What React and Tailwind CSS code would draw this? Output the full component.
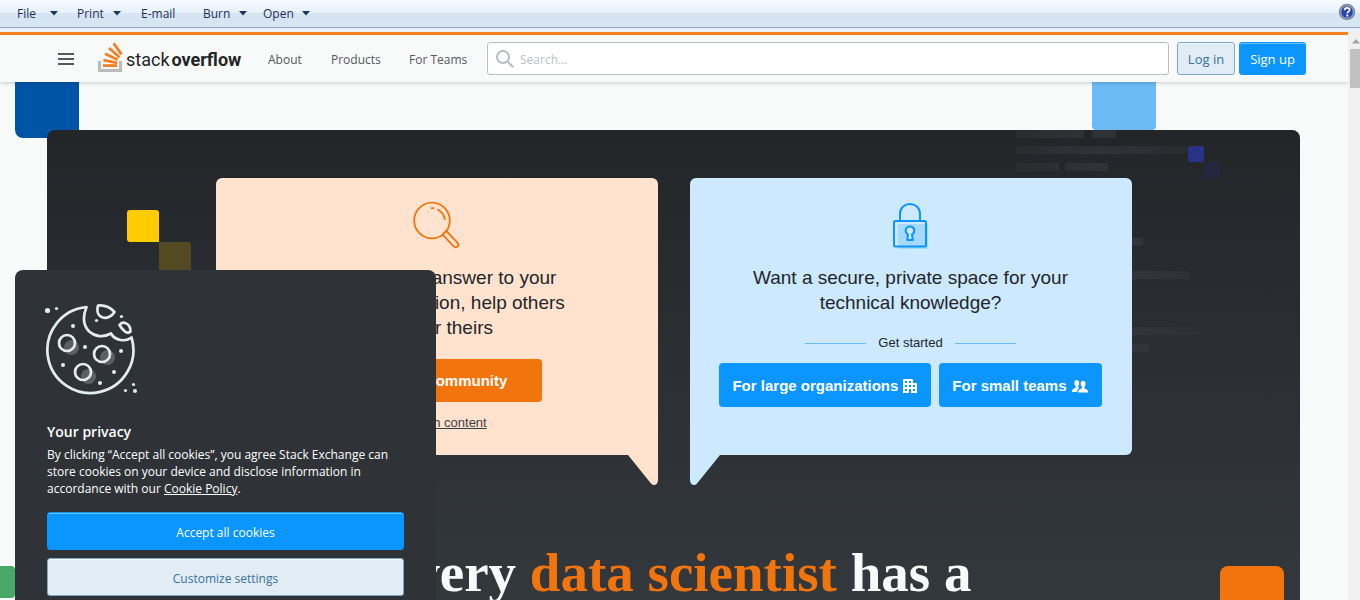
const ui = "font-['Open_Sans',sans-serif]";

function Caret() {
  return (
    <svg width="8" height="5" viewBox="0 0 8 5" aria-hidden="true">
      <path d="M0 0h8L4 4.5z" fill="#16365f" />
    </svg>
  );
}

function ToolbarItem({ label, menu, className }) {
  return (
    <button type="button" className={"flex items-center justify-between whitespace-nowrap text-left " + className}>
      {label}
      {menu && <Caret />}
    </button>
  );
}

function Toolbar() {
  return (
    <div className="flex h-7 shrink-0 items-center border-b border-[#92a7c1] bg-[linear-gradient(#f6fbff_0,#e6f1fa_13px,#d6e4f2_13px,#d8e6f3_27px)] pl-[17px] pr-1 text-xs text-[#1e2f5c]">
      <ToolbarItem label="File" menu className="mr-[19px] w-[41px]" />
      <ToolbarItem label="Print" menu className="mr-5 w-11" />
      <ToolbarItem label="E-mail" className="mr-5 w-[42px]" />
      <ToolbarItem label="Burn" menu className="mr-4 w-11" />
      <ToolbarItem label="Open" menu className="w-[47px]" />
      <button type="button" aria-label="Help" className="mb-1 ml-auto">
        <svg width="18" height="18" viewBox="0 0 18 18" aria-hidden="true">
          <circle cx="9" cy="9" r="7.5" fill="#2446a8" stroke="#8b8b93" strokeWidth="1.6" />
          <circle cx="9" cy="9" r="6.3" fill="none" stroke="#c9d0e4" strokeWidth=".8" />
          <path d="M6.6 7.2c0-3.2 5-3.1 5-.3 0 1.7-2.3 1.8-2.3 3.5" fill="none" stroke="#fff" strokeWidth="1.8" />
          <path d="M8.3 11.6h2v1.9h-2z" fill="#fff" />
        </svg>
      </button>
    </div>
  );
}

function Logo() {
  return (
    <a href="#home" aria-label="Stack Overflow" className="flex shrink-0 items-end">
      <svg width="26" height="30" viewBox="0 0 26 30" aria-hidden="true">
        <path d="M1.5 19v9.5h21V19" fill="none" stroke="#bcbbbb" strokeWidth="3" />
        <g stroke="#f48024" strokeWidth="2.8">
          <path d="M5 23.6h14" />
          <path d="M5.4 18.2l13.8 2.6" />
          <path d="M7.1 11.7l12.6 6.1" />
          <path d="M11 6l10.5 9.2" />
          <path d="M15.6 1.4l8 11" />
        </g>
      </svg>
      <span className="ml-0.5 font-['Roboto',sans-serif] text-lg leading-6 text-[#222426]">
        stack<b className="ml-0.5 font-bold">overflow</b>
      </span>
    </a>
  );
}

function Header() {
  return (
    <header className="relative z-10 border-t-[3px] border-[#f48024] bg-[#f8f9f9] shadow-[0_1px_4px_rgba(12,13,14,0.2)]">
      <div className="mx-auto flex h-[47px] max-w-[1264px] items-center text-[13px] text-[#525960]">
        <button type="button" aria-label="Menu" className="ml-4 mr-6 flex w-4 flex-col gap-[3px]">
          <span className="h-0.5 bg-[#525960]" />
          <span className="h-0.5 bg-[#525960]" />
          <span className="h-0.5 bg-[#525960]" />
        </button>
        <div className="w-[170px] pb-1">
          <Logo />
        </div>
        <nav className="flex w-[219px] pt-0.5 text-xs">
          <a href="#about" className="w-[63px]">About</a>
          <a href="#products" className="w-[78px]">Products</a>
          <a href="#teams">For Teams</a>
        </nav>
        <label className="flex h-[33px] flex-1 items-center rounded-[3px] border border-[#babfc4] bg-white pl-2">
          <svg width="18" height="18" viewBox="0 0 18 18" fill="#babfc4" aria-hidden="true">
            <path d="m18 16.5-5.14-5.18h-.35a7 7 0 1 0-1.19 1.19v.35L16.5 18l1.5-1.5zM12 7A5 5 0 1 1 2 7a5 5 0 0 1 10 0z" />
          </svg>
          <input type="search" aria-label="Search" placeholder="Search..." className="ml-1.5 min-w-0 flex-1 pt-0.5 text-xs outline-none placeholder:text-[#babfc4]" />
        </label>
        <button type="button" className="ml-2 h-[33px] w-[58px] rounded-[3px] border border-[#7aa7c7] bg-[#e1ecf4] pt-0.5 text-[#39739d] shadow-[inset_0_1px_0_rgba(255,255,255,0.7)]">Log in</button>
        <button type="button" className="ml-1 h-[33px] w-[67px] rounded-[3px] border border-[#0a95ff] bg-[#0a95ff] pt-0.5 text-white shadow-[inset_0_1px_0_rgba(255,255,255,0.4)]">Sign up</button>
      </div>
    </header>
  );
}

function Magnifier() {
  return (
    <svg width="48" height="48" viewBox="1 2 48 48" fill="none" stroke="#f2740d" strokeWidth="1.8" aria-hidden="true">
      <path d="M29 33.5l10.5 11.7c2 2 5 1 5-1.4L35 30z" fill="#fcd0ad" stroke="none" />
      <circle cx="20" cy="20.5" r="17.8" />
      <path d="M30.8 34.8l3.4-3.9L45.6 42.8c2.2 2.6-.9 6-3.6 3.7z" fill="#fee3cf" />
      <path d="M19.5 8.1l2 .1M26 9.7c3.8 1.9 6 4.8 6.8 9.3" strokeLinecap="round" />
    </svg>
  );
}

function Lock() {
  return (
    <svg width="48" height="48" viewBox="1 0 48 48" fill="none" stroke="#0a95ff" strokeWidth="2" aria-hidden="true">
      <path d="M12 22h30v25H12z" fill="#a6d9ff" stroke="none" />
      <rect x="8" y="19" width="32" height="25.5" rx="1.5" />
      <path d="M14 19v-7C14-1.3 34-1.3 34 12v7" />
      <path d="M22 32.5c-4.3-3-2-8 2-8s6.3 5 2 8l.8 5.5h-5.6z" fill="#cce9ff" strokeLinejoin="round" />
    </svg>
  );
}

function Building() {
  return (
    <svg width="14" height="14" viewBox="0 0 14 14" aria-hidden="true">
      <path fillRule="evenodd" fill="#fff" d="M1 0h8a1 1 0 0 1 1 1v3h3a1 1 0 0 1 1 1v9H0V1a1 1 0 0 1 1-1zm1 2v2h2V2H2zm4 0v2h2V2H6zM2 6v2h2V6H2zm4 0v2h2V6H6zm-4 4v2h2v-2H2zm4 0v4h2v-4H6zm4-4v2h2V6h-2zm0 4v2h2v-2h-2z" />
    </svg>
  );
}

function People() {
  return (
    <svg width="16" height="13" viewBox="0 0 16 13" fill="#fff" aria-hidden="true">
      <path d="M2.4 2.8C2.4.9 3.5 0 4.8 0s2.4.9 2.4 2.8c0 1.5-.3 2.6-.9 3.3-.3 1 .1 1.7.9 2.2C5.7 9.2 5.2 10.4 5.2 12H0c0-2.5.6-3 2.8-3.8 1-.4 1.1-1.2.7-2.1-.7-.7-1.1-1.9-1.1-3.3z" />
      <path d="M8.7 3.6C8.7 1.7 9.8.8 11.1.8s2.4.9 2.4 2.8c0 1.5-.3 2.5-1 3.2-.3 1 0 1.7 1.1 2.1 2 .8 2.4 1.3 2.4 3.7H6.2c0-2.3.6-2.9 2.6-3.7 1-.4 1.4-1.1 1.1-2.1-.9-.7-1.2-1.8-1.2-3.2z" />
    </svg>
  );
}

function CommunityCard() {
  return (
    <section className="relative flex flex-1 flex-col items-center rounded-t-md rounded-bl-md bg-[#ffe3cf] pt-6">
      <Magnifier />
      <h2 className="mt-[15px] text-center text-[19px] leading-[25px] text-[#232629]">
        Find the best answer to your<br />technical question, help others<br />answer theirs
      </h2>
      <button type="button" className="mt-[19px] h-[43px] w-[210px] rounded bg-[#f2740d] pt-0.5 text-[15px] font-bold text-white">Join the community</button>
      <a href="#content" className="mt-[11px] text-[13px] leading-5 text-[#3b4045] underline">or search content</a>
      <svg width="30" height="30" viewBox="0 0 30 30" className="absolute right-0 top-full" aria-hidden="true">
        <path d="M0 0h30v25c0 5-4.5 6.5-7 3.5z" fill="#ffe3cf" />
      </svg>
    </section>
  );
}

function TeamsCard() {
  return (
    <section className="relative flex flex-1 flex-col items-center rounded-t-md rounded-br-md bg-[#cce9ff] pt-6">
      <Lock />
      <h2 className="mt-[15px] text-center text-[19px] leading-[25px] text-[#232629]">
        Want a secure, private space for your<br />technical knowledge?
      </h2>
      <div className="mt-[18px] flex items-center gap-3 text-[13px] leading-5 text-[#232629]">
        <span className="h-px w-[61px] bg-[#6cbbf7]" />
        Get started
        <span className="h-px w-[61px] bg-[#6cbbf7]" />
      </div>
      <div className="mt-2.5 flex gap-2 text-[15px] font-bold text-white">
        <button type="button" className="flex h-11 items-center justify-center gap-[5px] rounded bg-[#0a95ff] pl-[13px] pr-3.5 pt-0.5">
          For large organizations <Building />
        </button>
        <button type="button" className="flex h-11 items-center justify-center gap-[5px] rounded bg-[#0a95ff] pl-[13px] pr-3.5 pt-0.5">
          For small teams <People />
        </button>
      </div>
      <svg width="30" height="30" viewBox="0 0 30 30" className="absolute left-0 top-full" aria-hidden="true">
        <path d="M30 0H0v25c0 5 4.5 6.5 7 3.5z" fill="#cce9ff" />
      </svg>
    </section>
  );
}

function CodeLines() {
  return (
    <svg width="210" height="224" viewBox="0 0 210 224" className="absolute right-[74px] top-0" aria-hidden="true">
      <defs>
        <linearGradient id="code-top" gradientUnits="userSpaceOnUse" x1="0" y1="0" x2="171" y2="0">
          <stop offset="0" stopColor="#2a2d30" />
          <stop offset=".5" stopColor="#2f3337" />
          <stop offset="1" stopColor="#292c2f" />
        </linearGradient>
        <linearGradient id="code-side" gradientUnits="userSpaceOnUse" x1="100" y1="0" x2="184" y2="0">
          <stop offset="0" stopColor="#33373b" />
          <stop offset="1" stopColor="#2d3034" />
        </linearGradient>
      </defs>
      <path d="M0 0h68v8H0zM76 0h24v8H76zM0 16h171v8H0zM0 33h43v8H0zM49 33h43v8H49z" fill="url(#code-top)" />
      <path d="M100 108h27v8h-27zM100 141h74v8h-74zM100 197h84v8h-84zM100 214h33v8h-33z" fill="url(#code-side)" />
      <rect x="172" y="16" width="16" height="16" rx="2" fill="#293386" />
      <rect x="188" y="32" width="16" height="16" rx="2" fill="#24283f" />
    </svg>
  );
}

function Hero() {
  return (
    <main className="relative pl-[47px] pr-12 pt-12">
      <div className="absolute left-[15px] top-0 h-14 w-16 rounded-b-lg bg-[#0054a6]" />
      <div className="absolute right-48 top-0 h-12 w-16 rounded-b-sm bg-[#6cbbf7]" />
      <div className="absolute left-[-49px] top-[484px] h-8 w-16 rounded bg-[#48a868]" />
      <div className="relative h-[620px] overflow-hidden rounded-lg bg-[linear-gradient(#232629_0,#2f3337_340px,#353a3e_520px)] pt-12 font-['Liberation_Sans',Arial,sans-serif]">
        <CodeLines />
        <div className="absolute left-20 top-20 size-8 rounded-[3px] rounded-br-none bg-[#ffcc01]" />
        <div className="absolute left-28 top-28 size-8 rounded-[3px] rounded-tl-none bg-[#534a24]" />
        <div className="absolute right-4 top-[436px] size-16 rounded-lg bg-[#f2740d]" />
        <div className="relative mx-auto flex h-[277px] max-w-[916px] gap-8">
          <CommunityCard />
          <TeamsCard />
        </div>
        <h1 className="mt-[88px] text-center font-['Liberation_Serif','Times_New_Roman',serif] text-[55px] font-bold leading-[60px] text-[#f8f9f9]">
          Every <span className="text-[#f2740d]">data scientist</span> has a
        </h1>
      </div>
    </main>
  );
}

function Cookie() {
  return (
    <svg width="96" height="94" viewBox="0 2 96 94" fill="none" stroke="#e3ecf3" strokeWidth="2.7" aria-hidden="true">
      <g fill="#5c6065" stroke="none">
        <circle cx="26.5" cy="47.5" r="7.5" />
        <circle cx="62.5" cy="57.5" r="7.5" />
        <circle cx="43.5" cy="76.5" r="7.5" />
      </g>
      <path d="M41.5 7.2A43 43 0 1 0 86.5 37.5C81 42 70 41 66 33.5 51 42 32 29 41.5 7.2z" strokeLinejoin="round" />
      <path d="M53 5.500c6-.6 12 1.500 16.500 6.500-6 10-20 7-16.500-6.500zM74.500 25c3-4.500 11-2 11 6.500-3 3-7 0-11-6.500z" strokeLinejoin="round" />
      <circle cx="22" cy="43" r="8" />
      <circle cx="57" cy="54" r="8" />
      <circle cx="38" cy="72" r="8" />
      <g fill="#e3ecf3" stroke="none">
        <circle cx="2.5" cy="10.5" r="2.6" />
        <circle cx="11.5" cy="8.5" r="1.6" />
        <circle cx="28" cy="26" r="2" />
        <circle cx="51.5" cy="20.5" r="1.6" />
        <circle cx="76.5" cy="16.5" r="1.6" />
        <circle cx="40" cy="47" r="2" />
        <circle cx="76" cy="51" r="2" />
        <circle cx="18" cy="65" r="2" />
        <circle cx="69" cy="72" r="2" />
        <circle cx="55" cy="83" r="2" />
        <circle cx="88.5" cy="84.5" r="1.6" />
        <circle cx="80.5" cy="90.5" r="1.6" />
        <circle cx="90" cy="91" r="2" />
      </g>
    </svg>
  );
}

function CookieBanner() {
  return (
    <aside aria-label="Your privacy" className="absolute -bottom-7 left-[15px] z-20 w-[421px] rounded-lg bg-[#2f3337] p-8 text-white">
      <div className="-ml-0.5">
        <Cookie />
      </div>
      <h2 className="mt-[26px] text-sm font-semibold leading-5">Your privacy</h2>
      <p className="mt-1 text-xs leading-[17px]">
        By clicking “Accept all cookies”, you agree Stack Exchange can<br />store cookies on your device and disclose information in<br />accordance with our <a href="#cookies" className="underline">Cookie Policy</a>.
      </p>
      <div className="mt-[15px] flex flex-col gap-2 text-xs">
        <button type="button" className="h-[38px] rounded-[3px] border border-[#0a95ff] bg-[#0a95ff] pt-1 shadow-[inset_0_1px_0_rgba(255,255,255,0.4)]">Accept all cookies</button>
        <button type="button" className="h-[38px] rounded-[3px] border border-[#7aa7c7] bg-[#e1ecf4] pt-1 text-[#39739d] shadow-[inset_0_1px_0_rgba(255,255,255,0.7)]">Customize settings</button>
      </div>
    </aside>
  );
}

export default function App() {
  return (
    <div className={"flex h-screen flex-col overflow-hidden bg-[#e8f0f7] " + ui}>
      <Toolbar />
      <div className="mt-1 flex min-h-0 flex-1">
        <div className="relative min-w-0 flex-1 overflow-hidden bg-[#f8faf9]">
          <Header />
          <Hero />
          <CookieBanner />
        </div>
        <div aria-hidden="true" className="flex w-3 flex-col items-end bg-[#f0f0f0] pt-[7px]">
          <svg width="8" height="5" viewBox="0 0 8 5" className="mb-[5px]">
            <path d="M0 4.5L4 0l4 4.5z" fill="#a3a3a3" />
          </svg>
          <div className="h-[39px] w-2.5 bg-[#c1c1c1]" />
        </div>
      </div>
    </div>
  );
}
